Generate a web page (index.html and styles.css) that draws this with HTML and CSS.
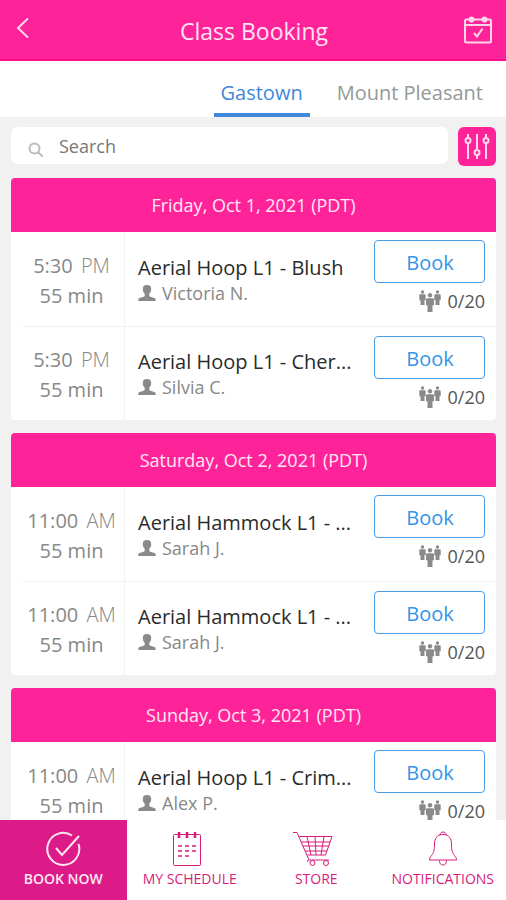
FILE: index.html
```html
<!DOCTYPE html>
<html lang="en">
<head>
<meta charset="utf-8">
<meta name="viewport" content="width=device-width, initial-scale=1">
<title>Class Booking</title>
<link rel="stylesheet" href="styles.css">
</head>
<body>
<svg class="symbols" aria-hidden="true">
  <symbol id="person" viewBox="0 0 18 16">
    <path d="M9 0C6 0 4.800 1.500 4.800 4c0 2 .7 3.700 1.900 4.800v2c0 .5-.3.800-1 1L1.500 13C.6 13.300.3 14 .3 16h17.400c0-2-.3-2.700-1.200-3l-4.200-1.200c-.7-.2-1-.5-1-1v-2c1.200-1.100 1.900-2.800 1.900-4.800C13.200 1.500 12 0 9 0z"/>
  </symbol>
  <symbol id="people" viewBox="0 0 24 24">
    <circle cx="4.500" cy="3" r="1.700"/>
    <path d="M2.500 5.300h4c.8 0 1.200.5 1.200 1.200v4.700H6.500V16h-4v-4.800H1.300V6.500c0-.7.400-1.200 1.200-1.200z"/>
    <circle cx="19.500" cy="3" r="1.700"/>
    <path d="M17.500 5.300h4c.8 0 1.200.5 1.200 1.200v4.700h-1.200V16h-4v-4.800h-1.200V6.500c0-.7.400-1.200 1.200-1.200z"/>
    <circle cx="12" cy="6.300" r="2.200"/>
    <path d="M9.500 9.300h5c1 0 1.500.6 1.500 1.500v5.500h-1.500V23h-5v-6.700H8v-5.500c0-.9.500-1.500 1.500-1.500z"/>
  </symbol>
</svg>
<div class="app">
  <header class="topbar">
    <button class="icon-button" type="button" aria-label="Back">
      <svg width="14" height="22" viewBox="0 0 14 22"><path d="M12 1.500 2 11l10 9.500"/></svg>
    </button>
    <h1>Class Booking</h1>
    <button class="icon-button" type="button" aria-label="Calendar">
      <svg width="28" height="28" viewBox="0 0 28 28"><rect x="1" y="3.500" width="26" height="23" rx="1.500"/><path d="M1 9h26M10 17l3 3.500 5.500-8"/><circle class="ring" cx="7.500" cy="3.500" r="2"/><circle class="ring" cx="20.500" cy="3.500" r="2"/></svg>
    </button>
  </header>
  <nav class="tabs" aria-label="Locations">
    <a class="tab tab-active" href="#gastown">Gastown</a>
    <a class="tab" href="#mount-pleasant">Mount Pleasant</a>
  </nav>
  <main class="content">
    <form class="search">
      <label class="search-box">
        <svg width="16" height="16" viewBox="0 0 16 16"><circle cx="6.500" cy="6.500" r="5"/><path d="m10.500 10.500 4 4"/></svg>
        <input type="search" placeholder="Search" aria-label="Search">
      </label>
      <button class="filter" type="button" aria-label="Filters">
        <svg width="26" height="26" viewBox="0 0 26 26"><path d="M4 0v4M4 9v16M13 0v16M13 21v4M22 0v4M22 9v16"/><circle cx="4" cy="6.500" r="2.500"/><circle cx="13" cy="18.500" r="2.500"/><circle cx="22" cy="6.500" r="2.500"/></svg>
      </button>
    </form>

    <section class="day">
      <h2>Friday, Oct 1, 2021 (PDT)</h2>
      <article class="session">
        <div class="when"><span>5:30 <span class="meridiem">PM</span></span><span>55 min</span></div>
        <div class="what"><h3>Aerial Hoop L1 - Blush</h3><p><svg class="person"><use href="#person"/></svg>Victoria N.</p></div>
        <div class="action"><button class="book" type="button">Book</button><p><svg class="people"><use href="#people"/></svg>0/20</p></div>
      </article>
      <article class="session">
        <div class="when"><span>5:30 <span class="meridiem">PM</span></span><span>55 min</span></div>
        <div class="what"><h3>Aerial Hoop L1 - Cher...</h3><p><svg class="person"><use href="#person"/></svg>Silvia C.</p></div>
        <div class="action"><button class="book" type="button">Book</button><p><svg class="people"><use href="#people"/></svg>0/20</p></div>
      </article>
    </section>

    <section class="day">
      <h2>Saturday, Oct 2, 2021 (PDT)</h2>
      <article class="session">
        <div class="when"><span>11:00 <span class="meridiem">AM</span></span><span>55 min</span></div>
        <div class="what"><h3>Aerial Hammock L1 - ...</h3><p><svg class="person"><use href="#person"/></svg>Sarah J.</p></div>
        <div class="action"><button class="book" type="button">Book</button><p><svg class="people"><use href="#people"/></svg>0/20</p></div>
      </article>
      <article class="session">
        <div class="when"><span>11:00 <span class="meridiem">AM</span></span><span>55 min</span></div>
        <div class="what"><h3>Aerial Hammock L1 - ...</h3><p><svg class="person"><use href="#person"/></svg>Sarah J.</p></div>
        <div class="action"><button class="book" type="button">Book</button><p><svg class="people"><use href="#people"/></svg>0/20</p></div>
      </article>
    </section>

    <section class="day">
      <h2>Sunday, Oct 3, 2021 (PDT)</h2>
      <article class="session">
        <div class="when"><span>11:00 <span class="meridiem">AM</span></span><span>55 min</span></div>
        <div class="what"><h3>Aerial Hoop L1 - Crim...</h3><p><svg class="person"><use href="#person"/></svg>Alex P.</p></div>
        <div class="action"><button class="book" type="button">Book</button><p><svg class="people"><use href="#people"/></svg>0/20</p></div>
      </article>
    </section>
  </main>
  <nav class="bottom" aria-label="Main">
    <a class="active" href="#book">
      <svg width="36" height="36" viewBox="0 0 36 36"><path stroke-width="2" d="M27 4.500A16 16 0 1 0 33.500 13M11 17l6 7L34 5"/></svg>
      Book now
    </a>
    <a href="#schedule">
      <svg width="36" height="36" viewBox="0 0 36 36"><rect x="1.500" y="3.500" width="27" height="31" rx="1"/><path stroke-width="2.500" d="M7 1v6M15 1v6M23 1v6"/><path stroke-width="1.500" d="M6 15h4m3 0h4m3 0h4M6 20h4m3 0h4m3 0h4M6 25h4m3 0h4"/></svg>
      My schedule
    </a>
    <a href="#store">
      <svg width="48" height="36" viewBox="0 0 48 36"><path d="M1 1.500h4L17 29h20M7 5.500h33L33.500 24H15.500M9 11h29M11 15h25.500M13 20h22M15 5.500l4 18.500M23 5.500l1 18.500M32 5.500 29 24M17 29c-2 0-2 1.500-1 2"/><circle cx="20.500" cy="32" r="2.500"/><circle cx="34" cy="32" r="2.500"/></svg>
      Store
    </a>
    <a href="#notifications">
      <svg width="36" height="36" viewBox="0 0 36 36"><path d="M15 4c0-4 6-4 6 0M18 3.500c-6 0-8.500 4-8.500 9.500 0 7-1 9-3 11.500-1.500 2-2 2.500-2 4.500h27c0-2-.5-2.500-2-4.500-2-2.500-3-4.500-3-11.500 0-5.500-2.500-9.500-8.500-9.500zM14.500 29.500a3.500 4.500 0 0 0 7 0"/></svg>
      Notifications
    </a>
  </nav>
</div>
</body>
</html>
```

FILE: styles.css
```css
* { box-sizing: border-box; }

body, h1, h2, h3, p { margin: 0; font-weight: 400; }

body {
  font-family: "Open Sans", "Noto Sans", sans-serif;
  background: #f1f1f1;
  color: #888;
}

button, input { font: inherit; }
button { cursor: pointer; }
a { text-decoration: none; }
svg { flex: none; fill: none; stroke: currentColor; }

.symbols { display: none; }

.app {
  height: 100vh;
  display: flex;
  flex-direction: column;
}

.topbar {
  display: flex;
  align-items: center;
  justify-content: space-between;
  padding: 0 14px 0 16px;
  height: 61px;
  flex: none;
  background: #ff2399;
  border-bottom: 2px solid #ff0c8c;
  color: #ffe3f2;
}

.topbar h1 { font-size: 23px; line-height: 32px; padding-top: 2px; }

.icon-button {
  display: flex;
  width: 28px;
  padding: 0;
  border: 0;
  background: none;
  color: #ffd5ec;
}

.icon-button svg { stroke-width: 2; }
.icon-button:first-child { padding-bottom: 3px; }
.ring { fill: #ffd5ec; }

.tabs {
  display: flex;
  justify-content: flex-end;
  gap: 20px;
  height: 56px;
  padding: 0 16px;
  flex: none;
  background: #fff;
}

.tab {
  display: flex;
  align-items: flex-end;
  padding: 0 7px 6px;
  border-bottom: 4px solid transparent;
  font-size: 20px;
  line-height: 28px;
  color: #949998;
}

.tab-active { color: #3f88da; border-color: #3f88da; }

.content {
  flex: 1;
  min-height: 0;
  padding: 10px 10px 0 11px;
  overflow-y: auto;
  scrollbar-width: none;
}

.search { display: flex; gap: 10px; align-items: flex-start; margin-bottom: 12px; }

.search-box {
  display: flex;
  flex: 1;
  align-items: center;
  gap: 15px;
  height: 37px;
  padding-left: 17px;
  border-radius: 7px;
  background: #fff;
}

.search-box svg { margin-top: 8px; color: #bbb; stroke-width: 2; }

.search-box input {
  flex: 1;
  min-width: 0;
  padding: 0;
  border: 0;
  outline: 0;
  background: none;
  font-size: 18px;
  line-height: 24px;
  color: #777;
}

.search-box input::placeholder { color: #777; opacity: 1; }

.filter {
  display: flex;
  align-items: center;
  justify-content: center;
  width: 38px;
  height: 39px;
  padding: 0;
  border: 0;
  border-radius: 6px;
  background: #ff2399;
  color: #ffd9ed;
}

.filter svg { stroke-width: 2; }

.day {
  margin-bottom: 13px;
  border-radius: 4px;
  overflow: hidden;
  background: #fff;
}

.day h2 {
  height: 54px;
  background: #ff2399;
  color: #ffe8f4;
  font-size: 18px;
  line-height: 54px;
  text-align: center;
}

.session { display: flex; height: 94px; position: relative; }

.session + .session::before {
  content: "";
  position: absolute;
  top: 0;
  left: 11px;
  right: 0;
  height: 1px;
  background: #f1f1f1;
}

.when {
  width: 114px;
  padding: 19px 0 0 8px;
  border-right: 1px solid #f3f3f3;
  display: flex;
  flex-direction: column;
  align-items: center;
  font-size: 20px;
  line-height: 30px;
}

.meridiem { padding-left: 3px; font-weight: 300; }

.what { flex: 1; min-width: 0; padding: 22px 0 0 13px; }

.what h3 {
  font-size: 20px;
  line-height: 27px;
  color: #2b2b2b;
  white-space: nowrap;
}

.what p {
  display: flex;
  align-items: center;
  gap: 6px;
  font-size: 18px;
  line-height: 24px;
}

.person, .people { fill: #8a8a8a; stroke: none; }
.person { width: 18px; height: 16px; }
.people { width: 24px; height: 24px; }

.action { width: 122px; padding: 8px 11px 0 0; }
.session + .session .action { padding-top: 10px; }

.book {
  display: block;
  width: 100%;
  height: 43px;
  padding: 2px 0 0 1px;
  border: 1px solid #4a9ae4;
  border-radius: 4px;
  background: #fff;
  font-size: 20px;
  color: #3295e8;
}

.action p {
  display: flex;
  align-items: center;
  justify-content: flex-end;
  gap: 6px;
  padding-top: 6px;
  font-size: 18px;
  line-height: 24px;
  color: #555;
}

.bottom {
  display: grid;
  grid-template-columns: repeat(4, 1fr);
  height: 80px;
  flex: none;
  background: #fff;
}

.bottom a {
  display: flex;
  flex-direction: column;
  align-items: center;
  gap: 3px;
  padding-top: 11px;
  font-size: 14px;
  line-height: 18px;
  text-transform: uppercase;
  white-space: nowrap;
  color: #d81b7c;
}

.bottom .active { background: #dc1a88; color: #ffe8f4; font-weight: 600; }
```
